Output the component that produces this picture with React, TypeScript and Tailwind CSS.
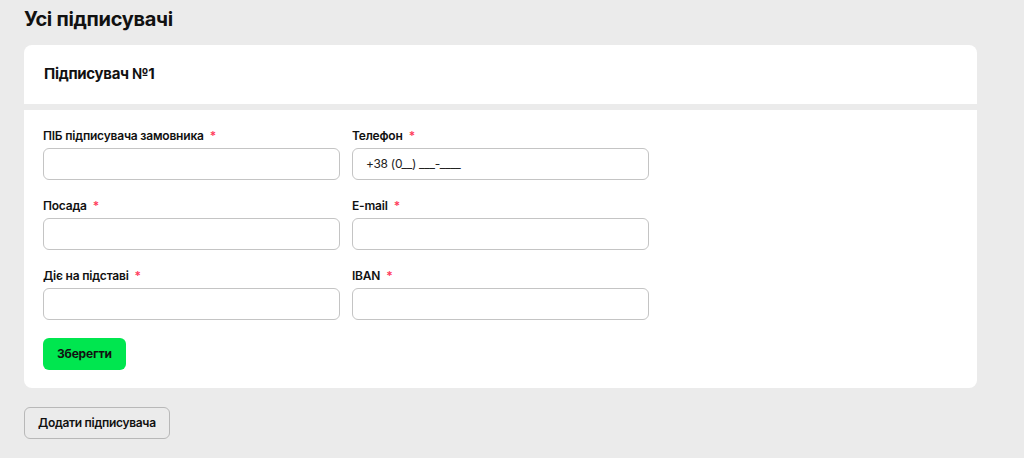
import React from 'react'

const fields = [
  { label: 'ПІБ підписувача замовника', placeholder: '' },
  { label: 'Телефон', placeholder: '+38 (0__) ___-____' },
  { label: 'Посада', placeholder: '' },
  { label: 'E-mail', placeholder: '' },
  { label: 'Діє на підставі', placeholder: '' },
  { label: 'IBAN', placeholder: '' },
]

export default function App() {
  return (
    <div className="min-h-screen bg-[#ebebeb] px-6 pt-[6px] pb-5 font-['Inter',sans-serif] text-[#111]">
      <h1 className="text-[20px] font-bold leading-[26px] tracking-[-0.3px]">Усі підписувачі</h1>

      <div className="mt-[13px] w-[953px]">
        {/* Header */}
        <div className="rounded-t-lg bg-white px-5 pt-5 pb-[21px]">
          <h2 className="text-[15px] font-bold leading-[18px] tracking-[-0.3px]">Підписувач №1</h2>
        </div>

        {/* Body */}
        <div className="mt-[6px] rounded-b-lg bg-white px-[19px] pt-[18px] pb-[18px]">
          <div className="grid w-[606px] grid-cols-2 gap-x-3 gap-y-[18px]">
            {fields.map((f) => (
              <div key={f.label} className="flex flex-col gap-1">
                <label className="flex items-center text-[12px] font-semibold leading-4 tracking-[-0.2px]">
                  {f.label}
                  <span className="ml-[6px] text-[#ff3b5c]">*</span>
                </label>
                <div className="flex h-8 items-center rounded-md border border-[#c4c4c4] bg-white px-[13px] text-[12px] tracking-[-0.3px] text-[#222]">
                  {f.placeholder}
                </div>
              </div>
            ))}
          </div>
          <button className="mt-[18px] h-8 rounded-md bg-[#00e64f] px-[14px] text-[12px] font-bold tracking-[-0.2px] text-[#111]">
            Зберегти
          </button>
        </div>
      </div>

      <button className="mt-[19px] h-8 rounded-md border border-[#b8b8b8] bg-[#ebebeb] px-[13px] text-[12px] font-semibold tracking-[-0.3px] text-[#111]">
        Додати підписувача
      </button>
    </div>
  )
}
